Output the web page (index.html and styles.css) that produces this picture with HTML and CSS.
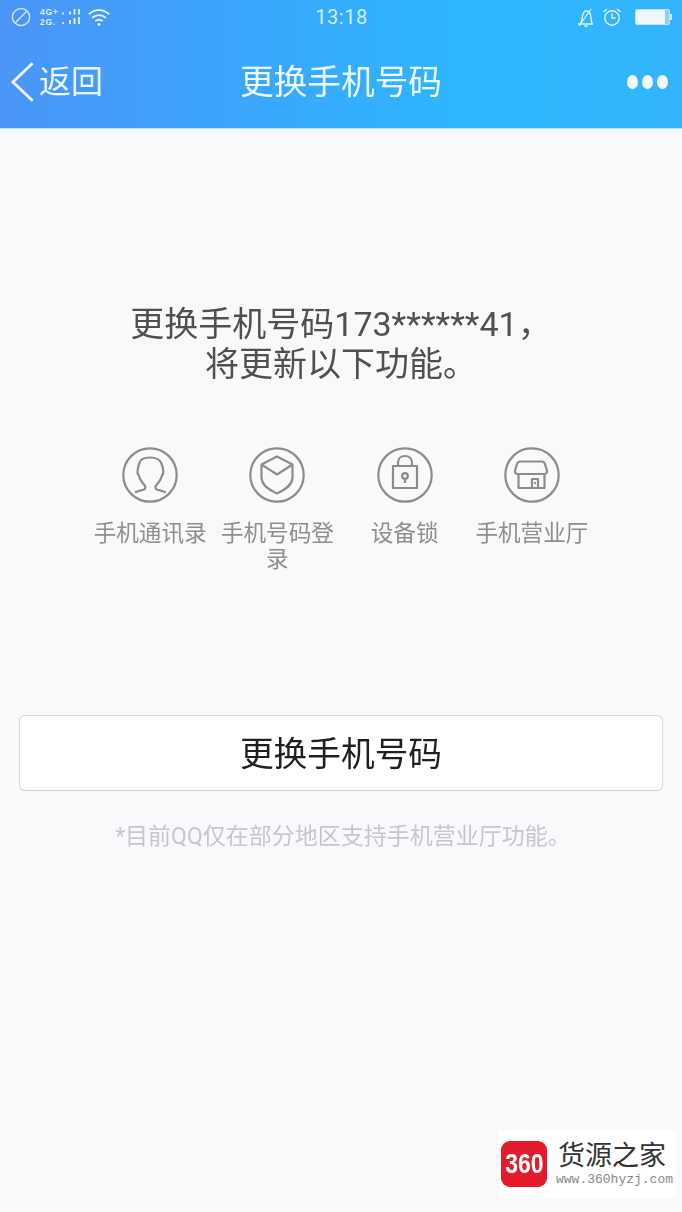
FILE: index.html
```html
<!DOCTYPE html>
<html lang="zh-CN">
<head>
<meta charset="utf-8">
<title>更换手机号码</title>
<link rel="stylesheet" href="styles.css">
</head>
<body>
<div class="page">
  <header class="header">
    <div class="status">
      <div class="status-left">
        <svg class="ic-dnd" viewBox="0 0 20 20"><circle cx="10" cy="10" r="8.6"/><path d="M4 16L16 4"/></svg>
        <div class="net"><span>4G+</span><span>2G.</span></div>
        <svg class="ic-sig" viewBox="0 0 18 18"><path d="M1 4.500v2M8 3.500v3M12.500 1v5.500M17 1v5.500M1 14v2M8 12v4M12.500 10v6M17 9v7"/></svg>
        <svg class="ic-wifi" viewBox="0 0 26 20"><path d="M2 7c6.500-6 15.500-6 22 0M5.500 11c4.500-4 10.500-4 15 0M9 14.500c2.500-2 5.500-2 8 0"/><circle cx="13" cy="18" r="1.500" class="dot"/></svg>
      </div>
      <div class="time">13:18</div>
      <div class="status-right">
        <svg class="ic-bell" viewBox="0 0 20 20"><path d="M2 17h15M4 17c2-3 2-5 2.500-8 .5-3 2-5 4-5s3.500 1.500 4 4l1.500 9M3 19L15 2M8.500 18.500c1 1 2 1 3 0"/></svg>
        <svg class="ic-alarm" viewBox="0 0 20 20"><circle cx="10" cy="11" r="7.200"/><path d="M10 6.500V11h3.500M1.500 5L5 2M18.500 5L15 2"/></svg>
        <div class="battery"><div class="cell"></div><div class="nub"></div></div>
      </div>
    </div>
    <nav class="nav">
      <div class="back">
        <svg class="chev" viewBox="0 0 26 42"><path d="M23.500 1.500L3 21l20.500 19.500"/></svg>
        <span>返回</span>
      </div>
      <h1 class="title">更换手机号码</h1>
      <div class="more"><i></i><i></i><i></i></div>
    </nav>
  </header>
  <main class="main">
    <p class="lead">更换手机号码173******41，<br>将更新以下功能。</p>
    <ul class="features">
      <li class="feature">
        <svg class="ficon" viewBox="0 0 56 56"><circle cx="28" cy="28" r="26.700"/><path d="M13 45.500c2.500-1.500 6-2 9-3 1.500-.7 1.800-2.500.7-4-2.500-3-5-6-5.700-9.500-1.200-1.500-1.800-3-1.500-5 .3-2.500.8-5 1.800-7.500C18 12.500 22 10.500 28 10.500s10 2 11.500 6c1 2.500 1.500 5 1.800 7.500.3 2-.3 3.500-1.500 5-.7 3.500-3.200 6.500-5.700 9.500-1.100 1.500-.8 3.300.7 4 3 1 6.500 1.500 9 3"/></svg>
        <span>手机通讯录</span>
      </li>
      <li class="feature">
        <svg class="ficon" viewBox="0 0 56 56"><circle cx="28" cy="28" r="26.700"/><path d="M12.500 17.500L28 9.500l15.500 8v13c0 8-8 12.500-15.500 16-7.500-3.500-15.500-8-15.500-16zM12.500 17.500L28 27.500l15.500-10"/></svg>
        <span>手机号码登录</span>
      </li>
      <li class="feature">
        <svg class="ficon" viewBox="0 0 56 56"><circle cx="28" cy="28" r="26.700"/><path d="M16 19h24v22H16zM21 19v-3.500c0-4 3-6.500 7-6.500s7 2.500 7 6.500V19M28 32v4"/><circle cx="28" cy="29" r="2.800"/></svg>
        <span>设备锁</span>
      </li>
      <li class="feature">
        <svg class="ficon" viewBox="0 0 56 56"><circle cx="28" cy="28" r="26.700"/><path d="M16 14.500h22c2 0 3 2 3.500 4l1.500 5.500c.3 2-1 3-3 3H14c-2 0-3.300-1-3-3l1.500-5.500c.5-2 1.500-4 3.500-4zM14.500 27v14h26V27M28 41v-9h6v9M30 36h2"/></svg>
        <span>手机营业厅</span>
      </li>
    </ul>
    <button class="primary" type="button">更换手机号码</button>
    <p class="note">*目前QQ仅在部分地区支持手机营业厅功能。</p>
  </main>
  <aside class="mark">
    <div class="mark-logo"><span>360</span></div>
    <div class="mark-text">
      <div class="mark-name">货源之家</div>
      <div class="mark-url">www.360hyzj.com</div>
    </div>
  </aside>
</div>
</body>
</html>
```
FILE: styles.css
```css
* { box-sizing: border-box; }
html, body { margin: 0; padding: 0; }
body {
  background: #f9f9fb;
  font-family: "Roboto", "Noto Sans CJK SC", sans-serif;
}
.page { position: relative; width: 682px; height: 1212px; overflow: hidden; filter: blur(.45px); }
.header {
  height: 129px;
  background: linear-gradient(90deg, #4b95f6 0%, #3aa6fb 35%, #2cb7fe 70%, #33b5fd 100%);
  border-bottom: 1px solid #b9dcf8;
  color: #fff;
}
.status {
  height: 34px;
  display: grid;
  grid-template-columns: 1fr auto 1fr;
  align-items: center;
  padding: 0 10px 0 11px;
}
.status-left, .status-right { display: flex; align-items: center; }
.status-right { justify-content: flex-end; }
.status svg { fill: none; stroke: #e6f3ff; }
.ic-dnd { width: 20px; height: 20px; stroke-width: 1.500; margin-right: 9px; opacity: .85; }
.net { display: flex; flex-direction: column; font: 700 8.500px/10px "Liberation Sans", sans-serif; letter-spacing: .7px; color: #e3f1ff; width: 22px; white-space: nowrap; }
.ic-sig { width: 18px; height: 18px; stroke-width: 1.800; }
.ic-wifi { width: 24px; height: 20px; stroke-width: 2; margin-left: 7px; }
.ic-wifi .dot { fill: #e6f3ff; stroke: none; }
.time { font-size: 20px; color: #d5ecff; letter-spacing: .5px; }
.ic-bell { width: 20px; height: 20px; stroke-width: 1.300; margin-right: 6px; }
.ic-alarm { width: 20px; height: 20px; stroke-width: 1.400; margin-right: 13px; }
.battery { display: flex; align-items: center; }
.cell { width: 35px; height: 16px; background: #f0f8ff; border: 1px solid #bfe3ff; border-radius: 2px; box-shadow: inset -4px 0 0 #8fd0ff; }
.nub { width: 2px; height: 6px; background: #d5ecff; }
.nav {
  height: 94px;
  display: grid;
  grid-template-columns: 1fr auto 1fr;
  align-items: center;
  padding: 2px 14px 0;
}
.back { display: flex; align-items: center; font-size: 32px; line-height: 1; color: #eef7ff; margin-left: -4px; }
.chev { width: 25px; height: 42px; fill: none; stroke: #eef7ff; stroke-width: 3; margin-right: 4px; flex: none; }
.title { margin: 0; font-size: 33.700px; font-weight: 400; line-height: 1; color: #f0f8ff; padding-top: 1px; }
.more { display: flex; justify-content: flex-end; gap: 4px; }
.more i { width: 11px; height: 14px; border-radius: 50%; background: #f2f9ff; }
.main { padding: 0 19px; display: flex; flex-direction: column; align-items: center; }
.lead {
  margin: 175px 0 0;
  font-size: 34px;
  line-height: 40px;
  text-align: center;
  color: #505052;
}
.features {
  list-style: none;
  margin: 63px 0 0;
  padding: 0;
  width: 509px;
  display: grid;
  grid-template-columns: repeat(4, 1fr);
}
.feature {
  display: flex;
  flex-direction: column;
  align-items: center;
  padding: 0 7px;
  font-size: 22.600px;
  line-height: 26px;
  color: #8e8e90;
  text-align: center;
}
.ficon { width: 56px; height: 56px; margin-bottom: 18px; fill: none; stroke: #8c8c8e; stroke-width: 2.200; stroke-linejoin: round; }
.primary {
  margin-top: 142px;
  width: 644px;
  height: 76px;
  background: #fff;
  border: 1px solid #d6d6da;
  border-bottom-color: #cfcfd3;
  border-radius: 6px;
  font: 400 33.700px/1 "Roboto", "Noto Sans CJK SC", sans-serif;
  color: #1f1f21;
  padding: 4px 0 0;
}
.note { margin: 33px 0 0 4px; font-size: 23px; line-height: 26px; color: #c5c7cc; white-space: nowrap; }
.mark {
  position: absolute;
  left: 499px;
  top: 1130px;
  width: 177px;
  height: 68px;
  background: #fff;
  display: flex;
  align-items: center;
  padding-left: 2px;
}
.mark-logo {
  width: 46px;
  height: 46px;
  border-radius: 9px;
  background: #e31b2c;
  color: #fff;
  font: 700 28px/46px "Liberation Sans", sans-serif;
  text-align: center;
  margin-right: 11px;
  flex: none;
  overflow: hidden;
}
.mark-logo span { display: block; transform: scaleX(.82); }
.mark-name { font: 400 27px/32px "Liberation Serif", "Noto Sans CJK SC", serif; color: #333; }
.mark-url { font: 400 13px/16px "Liberation Mono", monospace; color: #888; margin-left: -2px; white-space: nowrap; }
```
